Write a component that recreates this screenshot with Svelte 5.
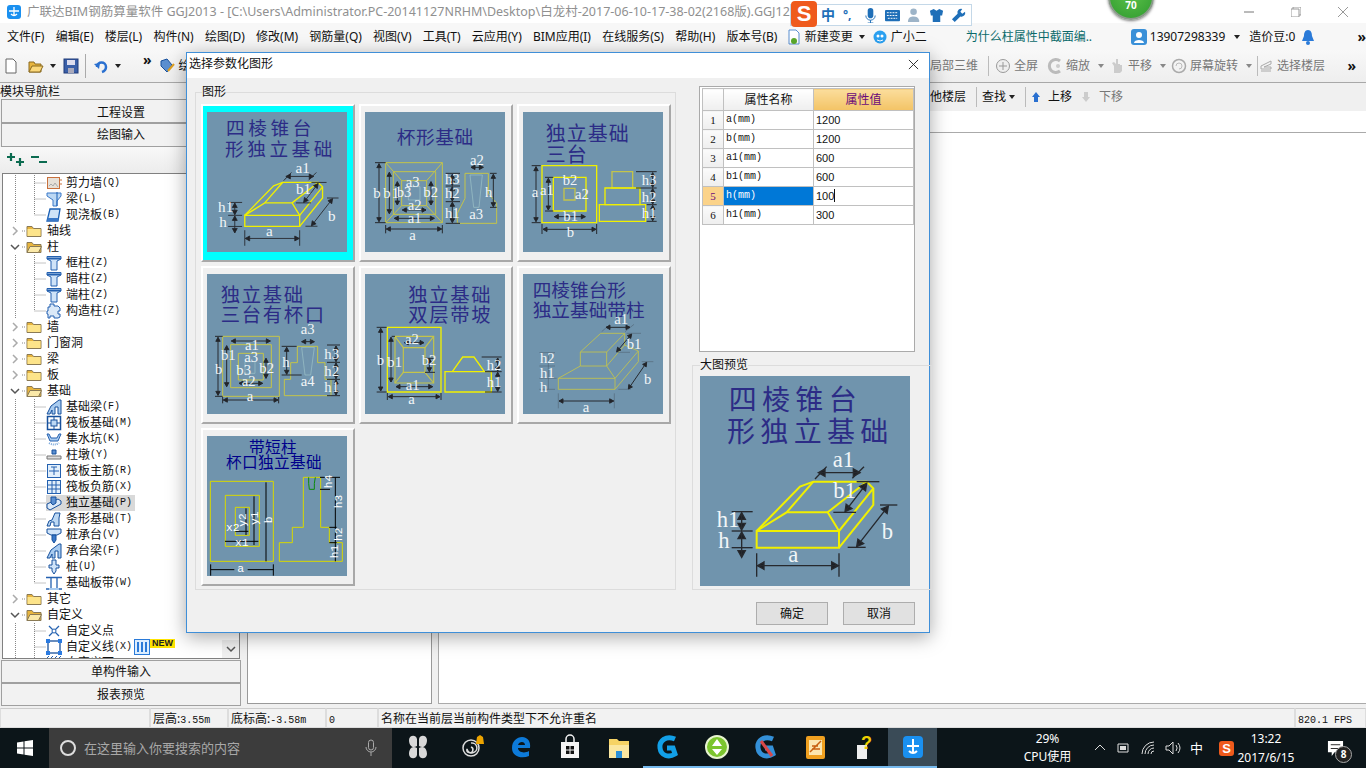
<script>
const r = (a, b, c, d) => `M${a} ${b}H${c}V${d}H${a}Z`;
const p = (...n) => 'M' + n.join(' ') ;
function dim(x1, y1, x2, y2, s = 12) {
  const L = Math.hypot(x2 - x1, y2 - y1), u = (x2 - x1) / L, v = (y2 - y1) / L, w = s * 0.55;
  const tri = (x, y, dx, dy) => `M${x} ${y}L${x + dx * s - dy * w} ${y + dy * s + dx * w}L${x + dx * s + dy * w} ${y + dy * s - dx * w}Z`;
  return `M${x1} ${y1}L${x2} ${y2}` + tri(x1, y1, u, v) + tri(x2, y2, -u, -v);
}
const t = (s, x, y, extra = {}) => ({ s, x, y, ...extra });

const d1 = {
  vb: '30 48 630 630', fs: 68,
  title: [t('四棱锥台', 116, 150, { size: 84, sp: 16 }), t('形独立基础', 111, 247, { size: 84, sp: 16 })],
  yellow: [r(200, 513, 447, 563), p(200, 513, 'L', 330, 380, 'L', 370, 365, 'H', 530, 'L', 550, 385, 'V', 435, 'L', 447, 563),
    p(200, 513, 'L', 290, 457, 'H', 413, 'L', 447, 513), p(290, 457, 'L', 370, 365), p(413, 457, 'L', 530, 365), p(447, 513, 'L', 550, 385)],
  yw: 6,
  ticks: [p(375, 357, 'L', 410, 320), p(487, 355, 'L', 522, 320), p(500, 365, 'H', 568), p(430, 457, 'H', 498), p(570, 435, 'H', 622), p(473, 562, 'H', 527),
    p(125, 455, 'H', 188), p(125, 513, 'H', 188), p(125, 563, 'H', 188), p(200, 580, 'V', 650), p(447, 580, 'V', 650)],
  dims: [[385, 338, 510, 338], [530, 370, 465, 455], [595, 438, 500, 560], [155, 458, 155, 510], [155, 516, 155, 592], [202, 617, 445, 617]],
  txt: [t('a1', 428, 322), t('b1', 430, 415), t('b', 575, 537), t('h1', 80, 500), t('h', 85, 565), t('a', 295, 605)],
  lw: 4
};
const d2 = {
  vb: '510 81 420 420', fs: 44,
  title: [t('杯形基础', 605, 178, { size: 56, sp: 2 })],
  olive: [r(572, 233, 742, 413), r(595, 260, 722, 388), r(620, 287, 695, 362), p(572, 233, 'L', 620, 287), p(742, 233, 'L', 695, 287), p(572, 413, 'L', 620, 362), p(742, 413, 'L', 695, 362),
    p(810, 265, 'H', 880, 'V', 325, 'L', 905, 355, 'V', 415, 'H', 787, 'V', 385, 'L', 810, 340, 'Z')],
  pale: [r(640, 305, 675, 345), p(825, 270, 'H', 862, 'L', 852, 367, 'H', 836, 'Z')],
  ticks: [p(540, 233, 'H', 572), p(540, 413, 'H', 572), p(572, 420, 'V', 445), p(742, 420, 'V', 445), p(752, 265, 'H', 795), p(752, 303, 'H', 795), p(752, 350, 'H', 795), p(752, 415, 'H', 795), p(885, 265, 'H', 905), p(885, 367, 'H', 905)],
  dims: [[552, 236, 552, 410], [583, 262, 583, 386], [607, 290, 607, 360], [708, 290, 708, 360], [598, 400, 718, 400], [622, 375, 693, 375], [574, 432, 740, 432], [828, 247, 865, 247], [895, 268, 895, 365], [772, 268, 772, 301], [772, 305, 772, 348], [772, 352, 772, 413]],
  txt: [t('b', 535, 338), t('b', 565, 338), t('1', 590, 338), t('b3', 605, 336), t('a3', 632, 305), t('b2', 685, 335), t('a2', 638, 375), t('a1', 638, 415), t('a', 643, 466), t('a2', 825, 240), t('h', 870, 337), t('h3', 750, 297), t('h2', 750, 338), t('h1', 750, 398), t('a3', 823, 403)]
};
const d3 = {
  vb: '39 36 420 420', fs: 44,
  title: [t('独立基础', 107, 122, { size: 60, sp: 3 }), t('三台', 107, 187, { size: 60, sp: 3 })],
  yellow: [r(96, 197, 260, 368), r(130, 232, 228, 333), r(285, 264, 390, 314), r(268, 314, 407, 364)],
  olive: [r(162, 265, 195, 300), r(306, 215, 368, 264)], yw: 4, ow: 4,
  ticks: [p(65, 197, 'H', 92), p(65, 368, 'H', 92), p(105, 232, 'H', 130), p(105, 333, 'H', 130), p(96, 372, 'V', 402), p(260, 372, 'V', 402), p(378, 215, 'H', 440), p(378, 264, 'H', 440), p(410, 314, 'H', 440), p(410, 364, 'H', 440)],
  dims: [[78, 200, 78, 365], [115, 235, 115, 330], [133, 350, 226, 350], [99, 388, 258, 388], [428, 218, 428, 262], [428, 266, 428, 312], [428, 316, 428, 362]],
  txt: [t('a', 65, 290), t('a1', 90, 285), t('b2', 158, 255), t('a2', 195, 297), t('b1', 160, 362), t('b', 170, 410), t('h3', 395, 255), t('h2', 395, 305), t('h1', 395, 355)]
};
const d4 = {
  vb: '36 27 420 420', fs: 44,
  title: [t('独立基础', 77, 110, { size: 58, sp: 5 }), t('三台有杯口', 77, 172, { size: 58, sp: 5 })],
  olive: [r(83, 214, 253, 394), r(107, 239, 229, 368), r(130, 265, 205, 345), p(307, 244, 'H', 368, 'V', 293, 'H', 390, 'V', 343, 'H', 408, 'V', 392, 'H', 268, 'V', 343, 'H', 287, 'V', 293, 'H', 307, 'Z')],
  pale: [p(320, 247, 'H', 358, 'L', 347, 330, 'H', 330, 'Z'), r(150, 290, 180, 325)],
  ticks: [p(60, 214, 'H', 83), p(60, 394, 'H', 83), p(260, 244, 'H', 305), p(260, 330, 'H', 320), p(396, 240, 'H', 435), p(396, 292, 'H', 435), p(396, 343, 'H', 435), p(396, 392, 'H', 435), p(83, 396, 'V', 415), p(251, 396, 'V', 415)],
  dims: [[69, 217, 69, 391], [95, 242, 95, 365], [85, 405, 249, 405], [132, 355, 203, 355], [109, 228, 226, 228], [213, 280, 213, 340], [320, 230, 358, 230], [275, 247, 275, 328], [423, 243, 423, 290], [423, 294, 423, 341], [423, 345, 423, 390]],
  txt: [t('b', 60, 327), t('b1', 78, 285), t('a1', 150, 255), t('a3', 148, 290), t('b3', 124, 330), t('b2', 193, 323), t('a2', 140, 363), t('a', 155, 409), t('a3', 317, 208), t('h', 262, 305), t('a4', 317, 363), t('h3', 388, 283), t('h2', 388, 332), t('h1', 388, 382)]
};
const d5 = {
  vb: '510 27 420 420', fs: 44,
  title: [t('独立基础', 640, 110, { size: 58, sp: 5 }), t('双层带坡', 640, 172, { size: 58, sp: 5 })],
  yellow: [r(577, 187, 738, 381), r(750, 320, 889, 381), p(772, 320, 'L', 803, 276, 'H', 837, 'L', 868, 320)], yw: 4,
  olive: [r(600, 214, 716, 354), r(625, 248, 690, 322), p(600, 214, 'L', 625, 248), p(716, 214, 'L', 690, 248), p(600, 354, 'L', 625, 322), p(716, 354, 'L', 690, 322)], ow: 3.5,
  ticks: [p(545, 187, 'H', 575), p(545, 381, 'H', 575), p(590, 214, 'H', 600), p(690, 322, 'H', 720), p(690, 280, 'H', 720), p(860, 276, 'H', 920), p(870, 320, 'H', 920), p(870, 381, 'H', 920), p(577, 384, 'V', 405), p(738, 384, 'V', 405)],
  dims: [[557, 190, 557, 378], [588, 217, 588, 351], [603, 365, 713, 365], [580, 395, 735, 395], [628, 233, 687, 233], [703, 280, 703, 320], [908, 279, 908, 318], [908, 322, 908, 379]],
  txt: [t('b', 545, 300), t('b1', 577, 305), t('a2', 630, 238), t('b2', 680, 300), t('a1', 632, 375), t('a', 640, 416), t('h2', 875, 315), t('h1', 875, 366)]
};
const d6 = {
  vb: '39 27 420 420', fs: 44,
  title: [t('四棱锥台形', 68, 95, { size: 56, sp: 0 }), t('独立基础带柱', 68, 155, { size: 56, sp: 0 })],
  olive: [r(145, 340, 315, 373), r(211, 261, 290, 303), p(211, 261, 'L', 272, 205, 'H', 344, 'L', 290, 261), p(344, 205, 'V', 240, 'L', 290, 303), p(145, 340, 'L', 211, 303), p(315, 340, 'L', 290, 303), p(344, 240, 'L', 385, 258, 'V', 290, 'L', 315, 373), p(315, 340, 'L', 385, 258)], ow: 2.5,
  thin: [p(115, 263, 'V', 373), p(88, 263, 'H', 135), p(88, 303, 'H', 135), p(88, 340, 'H', 140), p(88, 373, 'H', 135), p(275, 200, 'L', 300, 178), p(345, 200, 'L', 372, 178), p(350, 205, 'H', 393), p(318, 262, 'H', 360), p(395, 290, 'H', 430), p(325, 373, 'H', 362), p(145, 385, 'V', 430), p(313, 385, 'V', 430)],
  dims: [[288, 187, 360, 187], [365, 207, 320, 260], [410, 292, 355, 372], [147, 408, 311, 408]],
  txt: [t('a1', 313, 178), t('b1', 350, 253), t('h2', 90, 293), t('h1', 90, 338), t('h', 90, 382), t('b', 402, 357), t('a', 218, 440)]
};
const d7 = {
  vb: '36 33 420 420', fs: 34, black: true, mono: true,
  title: [t('带短柱', 162, 85, { size: 47, sp: 1, navy: true }), t('杯口独立基础', 93, 130, { size: 47, sp: 1, navy: true })],
  bright: [r(46, 169, 235, 409), r(91, 211, 193, 364), r(121, 247, 163, 331), p(325, 157, 'H', 377, 'V', 307, 'H', 403, 'V', 353, 'H', 442, 'V', 409, 'H', 253, 'V', 353, 'H', 292, 'V', 307, 'H', 325, 'Z')],
  green: [p(341, 157, 'V', 175, 'L', 343, 193, 'H', 358, 'V', 175, 'L', 361, 157)],
  ticks: [p(47, 418, 'V', 452), p(235, 418, 'V', 452), p(375, 157, 'H', 435), p(375, 193, 'H', 405), p(403, 307, 'H', 425), p(403, 353, 'H', 425), p(90, 349, 'H', 190), p(121, 319, 'H', 160), p(47, 434, 'H', 118), p(158, 434, 'H', 235), p(421, 157, 'V', 409), p(213, 172, 'V', 409), p(177, 214, 'V', 360), p(153, 250, 'V', 330)],
  dims: [],
  txt: [t('a', 127, 440), t('x1', 120, 362), t('x2', 93, 318), t('y2', 152, 305, { r: -90 }), t('y1', 190, 300, { r: -90 }), t('b', 232, 295, { r: -90 }), t('h4', 412, 190, { r: -90 }), t('h3', 440, 250, { r: -90 }), t('h2', 440, 348, { r: -90 }), t('h1', 428, 400, { r: -90 })]
};
const diagrams = [d1, d2, d3, d4, d5, d6, d7];

const sub = (name, key, icon, last) => ({ lv: 2, name, key, icon, last });
const root = (name, open, end) => ({ lv: 1, name, open, end });
const rows = [
  sub('剪力墙', '(Q)', 'wall'), sub('梁', '(L)', 'beam'), sub('现浇板', '(B)', 'slab', true),
  root('轴线'), root('柱', true),
  sub('框柱', '(Z)', 'col'), sub('暗柱', '(Z)', 'col'), sub('端柱', '(Z)', 'col'), sub('构造柱', '(Z)', 'gz', true),
  root('墙'), root('门窗洞'), root('梁'), root('板'), root('基础', true),
  sub('基础梁', '(F)', 'fb'), sub('筏板基础', '(M)', 'raft'), sub('集水坑', '(K)', 'pit'), sub('柱墩', '(Y)', 'cap'),
  sub('筏板主筋', '(R)', 'rz'), sub('筏板负筋', '(X)', 'rf'), { ...sub('独立基础', '(P)', 'iso'), sel: true },
  sub('条形基础', '(T)', 'strip'), sub('桩承台', '(V)', 'pc'), sub('承台梁', '(F)', 'fb'), sub('桩', '(U)', 'pile'), sub('基础板带', '(W)', 'band', true),
  root('其它'), root('自定义', true),
  sub('自定义点', '', 'pt'), { ...sub('自定义线', '(X)', 'line'), isNew: true }, sub('自定义面', '', 'face', true)
];
const menu = ['文件(F)', '编辑(E)', '楼层(L)', '构件(N)', '绘图(D)', '修改(M)', '钢筋量(Q)', '视图(V)', '工具(T)', '云应用(Y)', 'BIM应用(I)', '在线服务(S)', '帮助(H)', '版本号(B)'];
const attrs = [['a', '1200'], ['b', '1200'], ['a1', '600'], ['b1', '600'], ['h', '100'], ['h1', '300']];
const apps = ['fan', 'spiral', 'edge', 'store', 'files', 'g1', 'green', 'g2', 'note', 'help', 'gld'];
const running = new Set(['g1', 'green', 'g2', 'note', 'help', 'gld']);
</script>

{#snippet diagram(d)}
  <svg class="dg" viewBox={d.vb}>
    {#each d.title as l}
      <text class={l.navy ? 'ti navy' : 'ti'} x={l.x} y={l.y} font-size={l.size} letter-spacing={l.sp}>{l.s}</text>
    {/each}
    {#each d.pale ?? [] as s}<path class="pale" d={s} />{/each}
    {#each d.olive ?? [] as s}<path class="olive" stroke-width={d.ow ?? 3} d={s} />{/each}
    {#each d.yellow ?? [] as s}<path class="yel" stroke-width={d.yw ?? 4} d={s} />{/each}
    {#each d.bright ?? [] as s}<path class="bright" d={s} />{/each}
    {#each d.green ?? [] as s}<path class="green" d={s} />{/each}
    {#each d.thin ?? [] as s}<path class="thin" d={s} />{/each}
    {#each d.ticks ?? [] as s}<path class={d.black ? 'tick blk' : 'tick'} stroke-width={d.lw ?? 3} d={s} />{/each}
    {#each d.dims ?? [] as a}<path class="dimm" stroke-width={d.lw ?? 3} d={dim(...a, d.lw ? 20 : 12)} />{/each}
    {#each d.txt as l}
      <text class={d.mono ? 'lbl mono' : 'lbl'} x={l.x} y={l.y} font-size={d.fs}
        transform={l.r ? `rotate(${l.r} ${l.x} ${l.y})` : undefined}>{l.s}</text>
    {/each}
  </svg>
{/snippet}

{#snippet folder(open)}
  <svg class="i16" viewBox="0 0 16 16">
    <path d="M1 3.500h5l1.500 2H15v8H1z" fill="#e8b53e" stroke="#8a7a55" />
    {#if open}
      <path d="M1 13.500l3-6h11.500l-3 6z" fill="#fbe9a8" stroke="#8a7a55" />
    {:else}
      <rect x="1.500" y="6" width="13" height="7" fill="#fde48a" />
    {/if}
  </svg>
{/snippet}

{#snippet icon(k)}
  <svg class="i16" viewBox="0 0 16 16">
    {#if k === 'wall'}
      <rect x="1.500" y="2.500" width="12" height="11" fill="#e6e0d8" stroke="#c8703c" /><path d="M3 11l2-2 2 2 2-3 3 4" stroke="#aaa" fill="none" /><path d="M15 4v8" stroke="#c8703c" stroke-dasharray="2 2" />
    {:else if k === 'beam'}
      <path d="M1 2h14v3l-4 5v5H7V9L1 5z" fill="#bcd8f4" stroke="#3a78c8" /><path d="M11 1v14" stroke="#1a5fb4" />
    {:else if k === 'slab'}
      <path d="M4 2h10l-2 12H1z" fill="#cfe3f8" stroke="#1a5fb4" stroke-width="1.300" /><path d="M1.500 11h11l-.5 3H1z" fill="#3a78c8" />
    {:else if k === 'col'}
      <path d="M1 1.500h14v2.500l-4 2v9H5V6L1 4z" fill="#cfe3f8" stroke="#2461b0" /><path d="M1 3.500h14" stroke="#2461b0" stroke-width="2" />
    {:else if k === 'gz'}
      <path d="M4 1h4v2h4l2 2v3h-2v3h2v3l-2 1H8v-2H4v2H2v-4H1V8h1V4h2z" fill="#dbe9f8" stroke="#2461b0" />
    {:else if k === 'fb'}
      <path d="M1 15l4-8L13 1h2v14h-3V8H9v7H6v-4l-2 4z" fill="#a8cbf0" stroke="#17509c" />
    {:else if k === 'raft'}
      <rect x="1.500" y="1.500" width="13" height="13" fill="#fff" stroke="#17509c" stroke-width="1.500" /><rect x="5" y="5" width="6" height="6" fill="#bcd8f4" stroke="#17509c" /><path d="M1 8h4M11 8h4M8 1v4M8 11v4" stroke="#17509c" />
    {:else if k === 'pit'}
      <path d="M1 3l2 0 2 4h6l2-4h2l-3 7H4z" fill="#a8cbf0" stroke="#2461b0" /><path d="M3 12q5 3 10 0" stroke="#7aa8dc" stroke-width="2" fill="none" stroke-dasharray="1 1" />
    {:else if k === 'cap'}
      <path d="M6 3h4v4H6z" fill="#5b8fd0" stroke="#17509c" /><path d="M1 9h14v3H1z" fill="#ddd" stroke="#777" />
    {:else if k === 'rz' || k === 'rf'}
      <rect x="1.500" y="1.500" width="13" height="13" fill="#e2effb" stroke="#2461b0" /><path d={k === 'rz' ? 'M3 8h10M8 4v8M5 4h6' : 'M2 6h12M2 10h12M6 2v12M10 2v12'} stroke="#2461b0" fill="none" />
    {:else if k === 'iso'}
      <path d="M1 9l11-5 3 2v3L4 15 1 13z" fill="#dbe9f8" stroke="#17509c" /><path d="M5 2h5v6l-3 2-2-2z" fill="#5b8fd0" stroke="#17509c" />
    {:else if k === 'strip'}
      <path d="M1 15l2-5 3-1 3-7h5l-1 5v8H8V11H5l-1 4z" fill="#bcd8f4" stroke="#17509c" />
    {:else if k === 'pc'}
      <path d="M1 2h14v4l-4 2H5L1 6z" fill="#cfe3f8" stroke="#17509c" /><path d="M6 8h4v5l-2 3-2-3z" fill="#3a78c8" stroke="#17509c" />
    {:else if k === 'pile'}
      <path d="M6 1h4v5h3v3h-3v3l-2 3-2-3V9H3V6h3z" fill="#cfe3f8" stroke="#17509c" />
    {:else if k === 'band'}
      <path d="M0 2.500h16M0 14h16M5 3v11M11 3v11" stroke="#2461b0" stroke-width="1.300" /><path d="M3 13h10v2H3z" fill="#a8cbf0" />
    {:else if k === 'pt'}
      <path d="M3 3l10 10M13 3L3 13" stroke="#2461b0" stroke-width="1.300" /><circle cx="8" cy="8" r="2" fill="#fff" stroke="#2461b0" />
    {:else if k === 'line'}
      <rect x="2" y="2" width="12" height="12" fill="none" stroke="#17509c" stroke-width="1.300" /><path d="M0 0h4v4H0zM12 0h4v4h-4zM0 12h4v4H0zM12 12h4v4h-4z" fill="#2a7ae0" />
    {:else}
      <path d="M0 4l3-3M4 4l3-3M8 4l3-3M12 4l3-3" stroke="#2461b0" />
    {/if}
  </svg>
{/snippet}

{#snippet app(k)}
  <svg class="i28" viewBox="0 0 28 28">
    {#if k === 'fan'}
      <path d="M13 13C8 16 5 12 5 7s7-6 8-1zM15 13c5 3 8-1 8-6s-7-6-8-1zM13 15c-5-3-8 1-8 6s7 6 8 1zM15 15c5-3 8 1 8 6s-7 6-8 1z" fill="#d8d8d8" />
    {:else if k === 'spiral'}
      <circle cx="13" cy="15" r="8" fill="none" stroke="#ddd" stroke-width="1.500" /><path d="M13 10a5 5 0 1 1-4 6 3 3 0 1 0 4-2" fill="none" stroke="#ddd" stroke-width="1.500" /><path d="M18 11l1-7 3-2 3 2 1 7z" fill="#eda400" />
    {:else if k === 'edge'}
      <path d="M5 15C5 8 10 4 15 4c6 0 9 5 8 11H11c0 4 6 6 11 3v5c-7 3-17 1-17-8zm6-3h7c0-4-6-4-7 0z" fill="#0d7ad9" />
    {:else if k === 'store'}
      <path d="M5 9h18v16H5z" fill="#f4f4f4" /><path d="M10 9V6a4 4 0 0 1 8 0v3" fill="none" stroke="#f4f4f4" stroke-width="1.500" /><path d="M10 13h3.500v3.500H10zM14.500 13H18v3.500h-3.500zM10 17.500h3.500V21H10zM14.500 17.500H18V21h-3.500z" fill="#111" />
    {:else if k === 'files'}
      <path d="M4 6h8l2 2h10v17H4z" fill="#f6d365" /><path d="M4 12h20v13H4z" fill="#fbe7a0" /><path d="M11 18h6v7h-6z" fill="#2b8fd8" />
    {:else if k === 'g1' || k === 'g2'}
      <path d="M21 6C12 2 5 8 6 15c1 8 9 10 15 6l-2-6h-6" fill="none" stroke={k === 'g1' ? '#12a0e8' : '#3490d8'} stroke-width="5" />
      {#if k === 'g2'}<path d="M9 8l11 15" stroke="#d8484a" stroke-width="3" />{/if}
    {:else if k === 'green'}
      <circle cx="14" cy="14" r="11" fill="#7cc52e" stroke="#e8f4d0" stroke-width="2" /><path d="M14 6l5 7H9zM9 16h10l-5 6z" fill="#fff" />
    {:else if k === 'note'}
      <rect x="5" y="3" width="19" height="23" rx="2" fill="#f0a020" /><path d="M8 7h13v15H8z" fill="#fce6b0" /><path d="M9 19L20 8M11 13h6M11 16h8" stroke="#c86010" stroke-width="1.500" />
    {:else if k === 'help'}
      <rect x="7" y="12" width="10" height="14" fill="#eee" /><text class="qm" x="11" y="16" font-size="18">?</text>
    {:else}
      <rect x="4" y="3" width="20" height="22" rx="4" fill="#1a90f0" /><path d="M14 6v15M8 13h12M10 18q4 4 8 0" stroke="#fff" stroke-width="2" fill="none" />
    {/if}
  </svg>
{/snippet}

<div class="screen">
  <header class="titlebar">
    <svg class="logo" viewBox="0 0 14 14"><rect width="14" height="14" rx="3" fill="#1a90f0" /><path d="M7 2v9M2 6h10M4 9q3 3 6 0" stroke="#fff" stroke-width="1.300" fill="none" /></svg>
    <span class="apptitle">广联达BIM钢筋算量软件 GGJ2013 - [C:\Users\Administrator.PC-20141127NRHM\Desktop\白龙村-2017-06-10-17-38-02(2168版).GGJ12</span>
    <div class="winbtns">
      <span class="wb"><svg viewBox="0 0 10 10"><path d="M0 5h10" stroke="#777" /></svg></span>
      <span class="wb"><svg viewBox="0 0 10 10"><path d="M2 2V0h8v8H8M0 2h8v8H0z" stroke="#999" fill="none" /></svg></span>
      <span class="wb"><svg viewBox="0 0 10 10"><path d="M0 0l10 10M10 0L0 10" stroke="#999" /></svg></span>
    </div>
  </header>

  <div class="badge">70</div>

  <div class="sogou">
    <span class="sg-s">S</span><b class="sg-zh">中</b>
    <span class="sg-p">°,</span>
    <svg class="sg-i" viewBox="0 0 16 16"><rect x="5" y="0" width="6" height="11" rx="3" fill="#1f6fb8" /><path d="M3 8a5 5 0 0 0 10 0M8 13v3M5 16h6" stroke="#1f6fb8" fill="none" /></svg>
    <svg class="sg-i" viewBox="0 0 16 16"><rect x="0" y="2" width="16" height="12" rx="1" fill="#1f6fb8" /><path d="M2 5h12M2 8h12M3 11h10" stroke="#fff" stroke-dasharray="2 1" /></svg>
    <svg class="sg-i" viewBox="0 0 16 16"><circle cx="7" cy="4" r="3.500" fill="#9db4c8" /><path d="M1 15c0-5 3-6 6-6s5 1 6 4v2z" fill="#9db4c8" /></svg>
    <svg class="sg-i" viewBox="0 0 16 16"><path d="M5 1L1 3l1 5h2v7h8V8h2l1-5-4-2-3 2z" fill="#1f6fb8" /></svg>
    <svg class="sg-i" viewBox="0 0 16 16"><path d="M15 4l-3 2-2-2 2-3a4 4 0 0 0-5 5L1 12l3 3 6-6a4 4 0 0 0 5-5z" fill="#1f6fb8" /></svg>
  </div>

  <nav class="menubar">
    {#each menu as m}<span class="mi">{m}</span>{/each}
    <svg class="i16 ml5" viewBox="0 0 16 16"><path d="M3 1h7l3 3v11H3z" fill="#fff" stroke="#5b8fd0" /><circle cx="8" cy="12" r="3" fill="#5aa82a" /></svg>
    <span class="mi tight">新建变更</span><i class="caret"></i>
    <svg class="i16 ml4" viewBox="0 0 16 16"><circle cx="8" cy="8" r="6.500" fill="#2ba0f0" /><circle cx="6" cy="7" r="1.500" fill="#fff" /><circle cx="10" cy="7" r="1.500" fill="#fff" /><path d="M5 11q3 2 6 0" stroke="#fff" fill="none" /></svg>
    <span class="mi tight">广小二</span>
    <span class="notice">为什么柱属性中截面编..</span>
    <svg class="i16 user" viewBox="0 0 16 16"><rect width="16" height="16" rx="3" fill="#3a90d8" /><circle cx="8" cy="6" r="3" fill="#fff" /><path d="M3 14c0-4 10-4 10 0z" fill="#fff" /></svg>
    <span class="mi tight">13907298339</span><i class="caret mx"></i>
    <span class="mi tight">造价豆:0</span>
    <svg class="i16 bell" viewBox="0 0 16 16"><path d="M8 1c3 0 4 3 4 6l2 5H2l2-5c0-3 1-6 4-6z" fill="#2a7ad8" /><circle cx="8" cy="14" r="2" fill="#2a7ad8" /></svg>
    <span class="more">»</span>
  </nav>

  <div class="toolbar">
    <div class="tb-left">
      <svg class="i16" viewBox="0 0 16 16"><path d="M3 1h7l3 3v11H3z" fill="#fff" stroke="#666" /></svg>
      <svg class="i16 tm" viewBox="0 0 16 16"><path d="M1 4h5l1 2h6v8H1z" fill="#e8b53e" stroke="#8a6a20" /><path d="M1 14l3-6h11l-3 6z" fill="#fbd87a" stroke="#8a6a20" /></svg>
      <i class="caret"></i>
      <svg class="i16 tm2" viewBox="0 0 16 16"><rect x="1" y="1" width="14" height="14" fill="#3a5fa8" stroke="#1f3a78" /><rect x="4" y="2" width="8" height="5" fill="#dde" /><rect x="5" y="10" width="6" height="5" fill="#aab" /></svg>
      <span class="tsep"></span>
      <svg class="i16" viewBox="0 0 16 16"><path d="M4 9c0-6 9-6 9 0 0 2-1 4-4 5" fill="none" stroke="#2a70d0" stroke-width="2.500" /><path d="M1 6l6-1-1 6z" fill="#2a70d0" /></svg>
      <i class="caret"></i>
      <span class="more mt">»</span>
      <svg class="i16 draw" viewBox="0 0 16 16"><path d="M2 3l6-2 5 6-5 7-6-6z" fill="#5b8fd0" stroke="#17509c" /><path d="M9 13l6-7" stroke="#e0a020" stroke-width="2" /></svg>
      <span>绘图</span>
    </div>
    <div class="tb-right">
      <span class="gr">局部三维</span><span class="vsep v1"></span>
      <svg class="i16" viewBox="0 0 16 16"><circle cx="8" cy="8" r="6.500" fill="#eee" stroke="#999" /><path d="M8 4v8M4 8h8" stroke="#999" /></svg><span class="gr l1">全屏</span>
      <svg class="i16 g1" viewBox="0 0 16 16"><path d="M13 3a6.500 6.500 0 1 0 0 10" fill="none" stroke="#bbb" stroke-width="3" /><circle cx="11" cy="8" r="2" fill="#ccc" /></svg><span class="gr l1">缩放</span><i class="caret grey"></i>
      <svg class="i16 g2" viewBox="0 0 16 16"><path d="M5 15V8L3 5l2-1 2 2V1h2v5h2v1h2v6l-2 2z" fill="#ccc" /></svg><span class="gr l1">平移</span><i class="caret grey"></i>
      <svg class="i16 g2" viewBox="0 0 16 16"><circle cx="8" cy="8" r="6.500" fill="none" stroke="#aaa" stroke-width="1.500" /><path d="M5 8a3 3 0 1 1 3 3" stroke="#bbb" fill="none" /></svg><span class="gr l1">屏幕旋转</span><i class="caret grey"></i>
      <span class="vsep v2"></span>
      <svg class="i16" viewBox="0 0 16 16"><path d="M3 8l10-5v3L6 9l7 0v2H3zM3 13h10" stroke="#aaa" fill="none" /></svg><span class="gr l1">选择楼层</span>
      <span class="more r">»</span>
    </div>
  </div>

  <div class="workspace">
    <aside class="nav">
      <div class="navhead">模块导航栏</div>
      <button class="navbtn first">工程设置</button>
      <button class="navbtn">绘图输入</button>
      <div class="treetools">
        <svg viewBox="0 0 20 14"><path d="M0 4h8M4 0v8M9 9h8M13 5v8" stroke="#0b6b50" stroke-width="2.200" /></svg>
        <svg viewBox="0 0 20 14"><path d="M1 4h8M9 9h8" stroke="#0b6b50" stroke-width="2.200" /></svg>
      </div>
      <div class="tree">
        {#each rows as row}
          <div class="row">
            {#if row.lv === 1}
              <svg class="gut1" viewBox="0 0 23 16">
                {#if row.open}
                  <path d="M8 6l4 4 4-4" stroke="#555" stroke-width="1.500" fill="none" />
                {:else}
                  <path d="M10 4l4 4-4 4" stroke="#aaa" stroke-width="1.500" fill="none" />
                {/if}
                <path d="M19 8h4" stroke="#888" stroke-dasharray="1 1" />
              </svg>
              {@render folder(row.open)}
              <span class="rl">{row.name}</span>
            {:else}
              <svg class="gut2" viewBox="0 0 43 16">
                <path d="M12.500 0v16" stroke="#888" stroke-dasharray="1 1" />
                <path d={row.last ? 'M31.500 0v8h11' : 'M31.500 0v16M31.500 8h11'} stroke="#888" stroke-dasharray="1 1" fill="none" />
              </svg>
              <span class={row.sel ? 'leaf sel' : 'leaf'}>
                {@render icon(row.icon)}
                <span class="rl"><span>{row.name}</span><span class="key">{row.key}</span></span>
              </span>
              {#if row.isNew}
                <svg class="i16 ml0" viewBox="0 0 16 16"><rect x=".5" y=".5" width="15" height="15" fill="#dceeff" stroke="#2a7ad8" /><path d="M4 3v10M8 3v10M12 3v10" stroke="#2a7ad8" stroke-width="2" /></svg>
                <span class="newtag">NEW</span>
              {/if}
            {/if}
          </div>
        {/each}
        <div class="scrollarrow"><svg viewBox="0 0 10 10"><path d="M1 3l4 4 4-4" stroke="#555" stroke-width="1.500" fill="none" /></svg></div>
      </div>
      <button class="navbtn b2 top">单构件输入</button>
      <button class="navbtn b2">报表预览</button>
    </aside>

    <section class="midpane"></section>

    <section class="mainpane">
      <div class="subtools">
        <span class="st-text">他楼层</span><span class="vsep"></span>
        <span>查找</span><i class="caret"></i><span class="vsep"></span>
        <svg class="i12 up" viewBox="0 0 12 12"><path d="M6 1l4 5H8v5H4V6H2z" fill="#2a70d0" /></svg><span class="l1">上移</span>
        <svg class="i12 dn" viewBox="0 0 12 12"><path d="M6 11l4-5H8V1H4v5H2z" fill="#ccc" /></svg><span class="gr l1">下移</span>
      </div>
      <div class="strip"></div>
      <div class="canvas"></div>
    </section>
  </div>

  <footer class="status">
    <span class="c c1"></span>
    <span class="c c2">层高:<span class="k">3.55m</span></span>
    <span class="c c3">底标高:<span class="k">-3.58m</span></span>
    <span class="c c4"><span class="k">0</span></span>
    <span class="c c5">名称在当前层当前构件类型下不允许重名</span>
    <span class="c c6"><span class="k">820.1 FPS</span></span>
  </footer>

  <div class="taskbar">
    <div class="start"><svg viewBox="0 0 16 16"><path d="M0 2.500l6.500-1v6H0zM7.500 1.300L16 0v7.500H7.500zM0 8.500h6.500v6L0 13.500zM7.500 8.500H16V16l-8.500-1.300z" fill="#fff" /></svg></div>
    <div class="search">
      <span class="cortana"></span>
      <span class="stext">在这里输入你要搜索的内容</span>
      <svg class="mic" viewBox="0 0 12 18"><rect x="3.500" y="1" width="5" height="10" rx="2.500" fill="none" stroke="#aaa" /><path d="M1 8a5 5 0 0 0 10 0M6 13v4" stroke="#aaa" fill="none" /></svg>
    </div>
    <div class="apps">
      {#each apps as a, i}
        <span class={[ 'appc', running.has(a) && 'run', a === 'gld' && 'active', i === 0 && 'firstapp' ]}>{@render app(a)}</span>
      {/each}
    </div>
    <div class="cpu"><span>29%</span><span>CPU使用</span></div>
    <div class="tray">
      <svg class="i12" viewBox="0 0 12 12"><path d="M1 8l5-5 5 5" stroke="#ddd" fill="none" /></svg>
      <svg class="i16" viewBox="0 0 16 16"><path d="M3 4h10v8H3z" fill="none" stroke="#ddd" /><path d="M5 6h6v4H5z" fill="#ddd" /></svg>
      <svg class="i16" viewBox="0 0 16 16"><path d="M2 14a12 12 0 0 1 12-12M5 14a9 9 0 0 1 9-9M8 14a6 6 0 0 1 6-6M11 14a3 3 0 0 1 3-3" stroke="#ddd" fill="none" /></svg>
      <svg class="i16" viewBox="0 0 16 16"><path d="M1 6h3l4-4v12l-4-4H1z" fill="none" stroke="#ddd" /><path d="M11 5a5 5 0 0 1 0 6M13 3a8 8 0 0 1 0 10" stroke="#ddd" fill="none" /></svg>
      <span class="zh">中</span>
      <span class="sg-mini">S</span>
    </div>
    <div class="clock"><span>13:22</span><span>2017/6/15</span></div>
    <div class="notify">
      <svg viewBox="0 0 18 18"><path d="M1 1h16v12H8l-3 4v-4H1z" fill="#fff" /><path d="M4 5h10M4 9h10" stroke="#222" /></svg>
      <span class="nbadge">8</span>
    </div>
  </div>

  <div class="dialog">
    <div class="dlg-title">
      <span>选择参数化图形</span>
      <svg viewBox="0 0 12 12"><path d="M1 1l10 10M11 1L1 11" stroke="#222" /></svg>
    </div>
    <div class="dlg-body">
      <div class="dlg-main">
        <fieldset class="grp">
          <legend>图形</legend>
          <div class="grid">
            {#each diagrams as d, i}
              <div class={i === 0 ? 'cell on' : 'cell'}>{@render diagram(d)}</div>
            {/each}
          </div>
        </fieldset>
        <div class="side">
          <div class="tblbox">
            <table>
              <thead>
                <tr><th class="rh"></th><th class="nm">属性名称</th><th class="val">属性值</th></tr>
              </thead>
              <tbody>
                {#each attrs as a, i}
                  <tr class={i === 4 ? 'cur' : ''}>
                    <td class="rh">{i + 1}</td>
                    <td class="nm">{a[0]}(mm)</td>
                    <td class="vv">{a[1]}{#if i === 4}<i class="cursor"></i>{/if}</td>
                  </tr>
                {/each}
              </tbody>
            </table>
          </div>
          <fieldset class="grp prev">
            <legend>大图预览</legend>
            <div class="bigimg">{@render diagram(d1)}</div>
          </fieldset>
        </div>
      </div>
      <div class="dlg-btns">
        <button class="bt">确定</button>
        <button class="bt">取消</button>
      </div>
    </div>
  </div>
</div>

<style>
  :global(body) { margin: 0; }
  * { box-sizing: border-box; }
  .screen {
    position: relative; width: 1366px; height: 768px; overflow: hidden;
    display: flex; flex-direction: column; background: #f0f0f0;
    font: 12px/16px "Noto Sans", "Noto Sans CJK SC", sans-serif; color: #111;
  }
  svg { display: block; flex: none; }
  .i16 { width: 16px; height: 16px; }
  .i12 { width: 12px; height: 12px; }
  .i28 { width: 28px; height: 28px; }

  .titlebar { height: 23px; background: #fff; display: flex; align-items: center; padding-left: 2px; flex: none; }
  .logo { width: 14px; height: 14px; margin-right: 6px; margin-left: 5px; }
  .apptitle { color: #909090; font-size: 12.5px; white-space: nowrap; width: 1100px; overflow: hidden; }
  .winbtns { margin-left: auto; display: flex; }
  .wb { width: 47px; height: 23px; display: flex; align-items: center; justify-content: center; }
  .wb svg { width: 10px; height: 10px; }
  .badge {
    position: absolute; left: 1108px; top: -26px; width: 46px; height: 46px; border-radius: 50%;
    background: radial-gradient(circle at 50% 40%, #5cc24a, #2f9a2f); border: 2px solid #8b9a8b;
    box-shadow: 0 1px 3px #777; color: #fff; font-size: 10px; font-weight: 700;
    display: flex; align-items: flex-end; justify-content: center; padding-bottom: 5px;
  }
  .sogou {
    position: absolute; left: 790px; top: 4px; width: 182px; height: 22px; background: #fff;
    border: 1px solid #c4d8e8; display: flex; align-items: center; gap: 6px; padding-left: 30px; z-index: 3;
  }
  .sg-s {
    position: absolute; left: 0; top: -4px; width: 26px; height: 26px; background: #ef5a1c; border-radius: 4px;
    color: #fff; font: 700 22px/26px "Liberation Sans", sans-serif; text-align: center;
  }
  .sg-zh { color: #1f6fb8; font-size: 14px; width: 16px; }
  .sg-p { color: #1f6fb8; font-weight: 700; width: 14px; }
  .sg-i { width: 15px; height: 15px; margin-right: 1px; }

  .menubar { height: 27px; background: #f7f7f7; display: flex; align-items: center; padding-left: 7px; flex: none; white-space: nowrap; }
  .mi { margin-right: 11.2px; }
  .mi.tight { margin: 0 0 0 3px; }
  .ml5 { margin-left: -3px; }
  .ml4 { margin-left: 7px; }
  .caret { width: 0; height: 0; border: 3px solid transparent; border-top: 4px solid #222; border-bottom: 0; margin-left: 6px; flex: none; display: block; }
  .caret.grey { border-top-color: #888; }
  .caret.mx { margin: 0 6px 0 9px; }
  .notice { color: #0b6a6a; margin-left: 39px; width: 168px; }
  .bell { margin-left: 5px; }
  .more { font-weight: 700; font-size: 14px; margin-left: 41px; line-height: 12px; }
  .more.mt { margin-left: 22px; align-self: flex-start; margin-top: 4px; }
  .more.r { margin-left: auto; margin-right: 10px; }

  .toolbar { height: 33px; display: flex; background: linear-gradient(#f8f8f8, #eee); border-bottom: 1px solid #a8a8a8; flex: none; }
  .tb-left { width: 930px; display: flex; align-items: center; padding-left: 3px; gap: 0; }
  .tm { margin-left: 9px; }
  .tm2 { margin-left: 7px; }
  .tsep { width: 1px; height: 24px; background: #aaa; margin: 0 7px 0 6px; }
  .draw { margin: 0 4px 0 7px; }
  .tb-right { flex: 1; display: flex; align-items: center; white-space: nowrap; padding-left: 0; }
  .gr { color: #777; }
  .l1 { margin-left: 3px; }
  .g1 { margin-left: 9px; }
  .g2 { margin-left: 5px; }
  .tb-right .caret { margin-left: 8px; }
  .vsep { width: 1px; height: 20px; background: #bbb; margin: 0 5px; flex: none; }
  .vsep.v1 { margin: 0 6px 0 10px; }
  .vsep.v2 { margin: 0 0 0 5px; }

  .workspace { flex: 1; display: flex; min-height: 0; }
  .nav { width: 241px; display: flex; flex-direction: column; flex: none; padding-bottom: 1px; }
  .navhead { height: 16px; line-height: 15px; font-size: 12px; padding-top: 1px; }
  .navbtn {
    height: 24px; flex: none; width: 240px; margin: 0 0 0 1px; padding: 0; font: inherit; color: #111;
    background: #f2f2f2; border: 1px solid #a0a0a0; text-align: center;
  }
  .navbtn.first { padding-top: 3px; }
  .navbtn.b2 { height: 23px; }
  .navbtn.top { margin-top: 1px; }
  .treetools { height: 26px; display: flex; align-items: center; gap: 3px; padding-left: 7px; background: linear-gradient(#f8f8f8, #ececec); flex: none; }
  .treetools svg { width: 20px; height: 14px; }
  .tree {
    position: relative; height: 486px; width: 238px; margin-left: 2px; background: #fff; border: 1px solid #808080;
    overflow: hidden; padding-top: 1px; flex: none;
  }
  .row { height: 16px; display: flex; align-items: center; white-space: nowrap; }
  .gut1 { width: 23px; height: 16px; }
  .gut2 { width: 43px; height: 16px; }
  .rl { margin-left: 4px; display: flex; align-items: center; }
  .gut1 + svg + .rl { margin-left: 5px; }
  .leaf { display: flex; align-items: center; height: 16px; }
  .leaf.sel { background: #d9d9d9; padding-right: 3px; }
  .key { font: 10px/16px "Liberation Mono", monospace; }
  .ml0 { margin-left: 2px; }
  .newtag { background: #ffe400; font: 700 9px/9px "Liberation Sans", sans-serif; color: #222; padding: 0 2px; align-self: flex-start; }
  .scrollarrow { position: absolute; right: 0; bottom: 0; width: 17px; height: 18px; background: #f0f0f0; display: flex; align-items: center; justify-content: center; }
  .scrollarrow svg { width: 10px; height: 10px; }

  .midpane { width: 185px; margin: 30px 0 4px 6px; background: #fff; border: 1px solid #999; flex: none; }
  .mainpane { flex: 1; margin-left: 6px; display: flex; flex-direction: column; margin-bottom: 4px; }
  .subtools {
    height: 28px; display: flex; align-items: center; padding-left: 492px; background: #f0f0f0; white-space: nowrap; flex: none;
  }
  .st-text { width: 41px; }
  .subtools .caret { margin: 0 5px 0 3px; }
  .up { margin-left: -1px; margin-right: 3px; }
  .dn { margin-left: 8px; margin-right: 4px; }
  .strip { height: 22px; background: #fff; flex: none; border-bottom: 1px solid #aaa; margin-left: -1px; }
  .canvas { flex: 1; background: #fff; border: 1px solid #aaa; border-top: 0; border-right: 0; }

  .status { height: 20px; flex: none; display: flex; background: #f2f2f2; }
  .c { border: 1px solid #ddd; border-top-color: #ccc; padding-left: 2px; line-height: 19px; white-space: nowrap; overflow: hidden; }
  .k { font: 10px/19px "Liberation Mono", monospace; }
  .c1 { width: 150px; } .c2 { width: 78px; } .c3 { width: 98px; } .c4 { width: 52px; } .c5 { width: 917px; } .c6 { width: 71px; }

  .taskbar { height: 40px; flex: none; background: #0c1519; color: #fff; display: flex; align-items: stretch; }
  .start { width: 49px; display: flex; align-items: center; justify-content: center; }
  .start svg { width: 16px; height: 16px; }
  .search { width: 343px; background: #3c3c3c; display: flex; align-items: center; padding-left: 11px; }
  .cortana { width: 16px; height: 16px; border: 2px solid #ddd; border-radius: 50%; }
  .stext { color: #a8a8a8; font-size: 13px; margin-left: 8px; flex: 1; }
  .mic { width: 12px; height: 18px; margin-right: 15px; }
  .apps { display: flex; width: 546px; padding-left: 1px; }
  .appc { width: 49px; display: flex; align-items: center; justify-content: center; border-bottom: 2px solid transparent; flex: none; }
  .appc.firstapp { width: 54px; justify-content: flex-start; padding-left: 11px; }
  .appc.run { border-bottom-color: #76b9ed; }
  .appc.active { background: #3a4b57; }
  .qm { fill: #f0d000; font-family: "Liberation Sans", sans-serif; font-weight: 700; }
  .cpu { width: 93px; display: flex; flex-direction: column; align-items: center; justify-content: center; gap: 2px; margin-left: 63px; line-height: 16px; }
  .tray { display: flex; align-items: center; gap: 9px; width: 155px; }
  .zh { font-size: 13px; }
  .sg-mini { width: 15px; height: 15px; background: #ef5a1c; border-radius: 3px; font: 700 13px/15px "Liberation Sans", sans-serif; text-align: center; margin-left: 7px; }
  .clock { width: 80px; display: flex; flex-direction: column; align-items: center; justify-content: center; gap: 3px; margin-left: -23px; }
  .notify { position: relative; width: 40px; margin-left: 9px; display: flex; align-items: center; justify-content: center; }
  .notify svg { width: 17px; height: 17px; }
  .nbadge { position: absolute; left: 20px; top: 18px; width: 17px; height: 17px; border-radius: 50%; background: #222; border: 1px solid #aaa; font-size: 10px; line-height: 15px; text-align: center; font-weight: 700; }

  .dialog {
    position: absolute; left: 186px; top: 52px; width: 744px; height: 581px; z-index: 2;
    border: 1px solid #3f8fd8; background: #f0f0f0; box-shadow: 0 4px 18px rgba(0,0,0,.35);
    display: flex; flex-direction: column;
  }
  .dlg-title { height: 25px; background: #fff; display: flex; align-items: center; justify-content: space-between; padding: 0 10px 3px 2px; flex: none; }
  .dlg-title svg { width: 11px; height: 11px; }
  .dlg-body { flex: 1; display: flex; flex-direction: column; padding: 8px 0 0 8px; min-height: 0; }
  .dlg-main { display: flex; gap: 16px; height: 504px; flex: none; }
  .grp { border: 1px solid #dcdcdc; margin: 0; min-width: 0; }
  .grp legend { padding: 0; margin-left: 1px; line-height: 12px; font-size: 12px; }
  .grp.prev legend { margin-left: 0; }
  .grp:not(.prev) { width: 481px; height: 504px; padding: 6px 0 0 5px; flex: none; }
  .grid { display: grid; grid-template-columns: repeat(3, 154px); grid-template-rows: repeat(3, 158px); gap: 4px; }
  .cell {
    background: #f0f0f0; border: 2px solid; border-color: #fff #a8a8a8 #a8a8a8 #fff;
    display: flex; align-items: center; justify-content: center; padding: 0 2px 2px 0;
  }
  .cell.on { background: #00ffff; }
  .dg { width: 140px; height: 140px; background: #7094ad; }
  .bigimg .dg { width: 210px; height: 210px; }
  .ti { fill: #2c2c86; font-family: "Noto Sans CJK SC", sans-serif; }
  .ti.navy { fill: #00008b; }
  .lbl { fill: #f2f6f8; font-family: "Liberation Serif", serif; }
  .lbl.mono { font-family: "Liberation Mono", monospace; fill: #fff; }
  .yel { fill: none; stroke: #f0f000; }
  .olive { fill: none; stroke: #c4c44a; }
  .bright { fill: none; stroke: #d8d800; stroke-width: 3; }
  .green { fill: none; stroke: #0a8a0a; stroke-width: 3; }
  .pale { fill: none; stroke: #9fc4c8; stroke-width: 2; }
  .thin { fill: none; stroke: #4b5a68; stroke-width: 1.500; }
  .tick { fill: none; stroke: #26292e; }
  .tick.blk { stroke: #000; }
  .dimm { fill: #1c1f24; stroke: #26292e; }

  .side { width: 238px; display: flex; flex-direction: column; flex: none; margin-left: 0; }
  .tblbox { width: 216px; height: 266px; margin-left: 7px; background: #fff; border: 1px solid #aaa; padding: 1px 2px; flex: none; }
  table { border-collapse: collapse; table-layout: fixed; width: 211px; }
  th, td { border: 1px solid #c0c0c0; padding: 0 0 0 2px; height: 19px; font-weight: 400; text-align: left; white-space: nowrap; overflow: hidden; }
  thead th { height: 22px; text-align: center; background: linear-gradient(#fff, #eee); padding: 0; font-size: 12px; }
  th.rh { width: 21px; }
  th.nm { width: 90px; }
  th.val { width: 100px; background: linear-gradient(#fbdd9c, #f3c365); color: #6a0a7a; }
  td.rh { background: linear-gradient(#fbfbfb, #eee); text-align: center; padding: 0; font: 11px/16px "Liberation Serif", serif; }
  td.nm { font: 10px/16px "Liberation Mono", monospace; }
  td.vv { font: 11px/16px "Liberation Sans", sans-serif; }
  .cur td.rh { background: #fbd38a; color: #6a0a7a; }
  .cur td.nm { background: #0078d7; color: #fff; }
  .cursor { display: inline-block; width: 1px; height: 13px; background: #111; vertical-align: -2px; }
  .grp.prev { height: 231px; margin-top: 7px; padding: 5px 0 0 7px; width: 240px; }
  .dlg-btns { display: flex; justify-content: flex-end; gap: 15px; padding: 0 14px 0 0; margin-top: 12px; }
  .bt { width: 72px; height: 23px; background: #e1e1e1; border: 1px solid #adadad; font: inherit; color: #111; padding: 0; }
</style>
